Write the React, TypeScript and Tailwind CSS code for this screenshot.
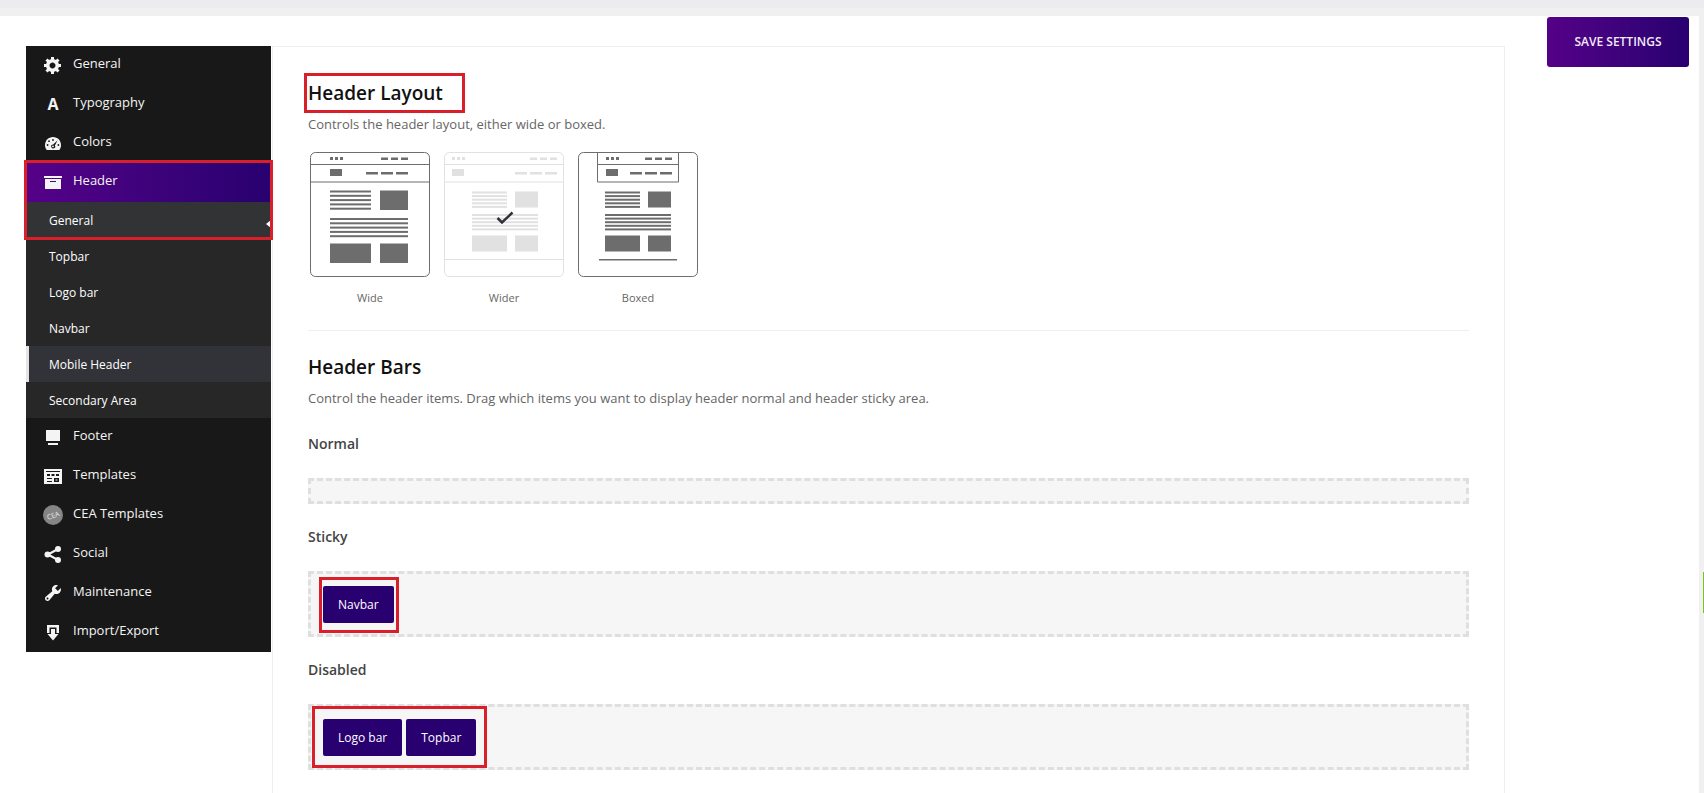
import React, { useState } from "react";
import clsx from "clsx";

type IconProps = { children: React.ReactNode };

function Icon({ children }: IconProps) {
  return (
    <svg viewBox="0 0 20 20" className="w-5 h-5 shrink-0" fill="currentColor" aria-hidden="true">
      {children}
    </svg>
  );
}

const icons = {
  general: (
    <path d="M18 12h-2.18c-.17.7-.44 1.35-.81 1.93l1.54 1.54-2.1 2.1-1.54-1.54c-.58.36-1.23.63-1.91.79V19H8v-2.18c-.68-.16-1.33-.43-1.91-.79l-1.54 1.54-2.12-2.12 1.54-1.54c-.36-.58-.63-1.23-.79-1.91H1V9.03h2.17c.16-.7.44-1.35.8-1.94L2.43 5.55l2.1-2.1 1.54 1.54c.58-.37 1.24-.64 1.93-.81V2h3v2.18c.68.16 1.33.43 1.91.79l1.54-1.54 2.12 2.12-1.54 1.54c.36.59.64 1.24.8 1.94H18V12zm-8.5 1.5c1.66 0 3-1.34 3-3s-1.34-3-3-3-3 1.34-3 3 1.34 3 3 3z" />
  ),
  colors: (
    <>
      <path d="M3.76 17h12.48c1.1-1.37 1.76-3.11 1.76-5 0-4.42-3.58-8-8-8s-8 3.58-8 8c0 1.89.66 3.63 1.76 5z" />
      <g fill="#181818">
        <circle cx="10" cy="7" r="0.900" />
        <circle cx="6" cy="8.2" r="0.900" />
        <circle cx="4.6" cy="12" r="0.900" />
        <circle cx="15.4" cy="12" r="0.900" />
        <path d="M14.6 7.2l-2.7 5.2a2 2 0 1 1-1.7-1z" />
      </g>
      <circle cx="10" cy="13.4" r="0.9" />
    </>
  ),
  header: <path d="M19 4v2H1V4h18zM2 7h16v10H2V7zm11 3V9H7v1h6z" />,
  footer: <path d="M3 3h14v11H3zM5 16h10v2H5z" />,
  templates: (
    <path
      fillRule="evenodd"
      d="M1 3h18v15H1zM3 5v1h14V5zM4 8v2h3V8zM8.500 8v2h3V8zM13 8v2h3V8zM4 12v1h5v-1zM4 15v1h5v-1zM11 12v4h5v-4zM12.500 13.500h2v1h-2z"
    />
  ),
  social: (
    <>
      <path d="M5 10.500L15 5M5 10.500L15 16" stroke="currentColor" strokeWidth="2" />
      <circle cx="4.500" cy="10.500" r="3" />
      <circle cx="15" cy="5" r="3" />
      <circle cx="15" cy="16" r="3" />
    </>
  ),
  maintenance: (
    <path d="M16.680 9.770c-1.340 1.340-3.300 1.670-4.950.990l-5.410 6.520c-.990.990-2.590.990-3.580 0s-.990-2.590 0-3.570l6.520-5.420c-.680-1.650-.350-3.610.990-4.950 1.280-1.280 3.120-1.620 4.720-1.060l-2.890 2.890 2.820 2.820 2.860-2.870c.530 1.580.180 3.390-1.080 4.650zM3.810 16.210c.400.390 1.040.390 1.430 0 .400-.400.400-1.040 0-1.430-.390-.400-1.030-.400-1.430 0-.390.390-.390 1.030 0 1.430z" />
  ),
  importExport: <path d="M4 3h12v8h-2.500V5.500h-7V11H4zM8 7h4v5h3.500L10 18.500 4.500 12H8z" />,
};

function CeaLogo() {
  return (
    <svg viewBox="0 0 20 20" className="w-5 h-5 shrink-0" aria-hidden="true">
      <circle cx="10" cy="10" r="10" fill="#858585" />
      <text x="10" y="13" fontSize="7" textAnchor="middle" fill="#e8e8e8" transform="rotate(-20 10 10)">
        CEA
      </text>
    </svg>
  );
}

const topItems = [
  { label: "General", icon: <Icon>{icons.general}</Icon> },
  { label: "Typography", icon: <span className="w-5 text-center text-base font-bold" aria-hidden="true">A</span> },
  { label: "Colors", icon: <Icon>{icons.colors}</Icon> },
];

const subItems = ["General", "Topbar", "Logo bar", "Navbar", "Mobile Header", "Secondary Area"];

const bottomItems = [
  { label: "Footer", icon: <Icon>{icons.footer}</Icon> },
  { label: "Templates", icon: <Icon>{icons.templates}</Icon> },
  { label: "CEA Templates", icon: <CeaLogo /> },
  { label: "Social", icon: <Icon>{icons.social}</Icon> },
  { label: "Maintenance", icon: <Icon>{icons.maintenance}</Icon> },
  { label: "Import/Export", icon: <Icon>{icons.importExport}</Icon> },
];

function NavItem({ label, icon, active }: { label: string; icon: React.ReactNode; active?: boolean }) {
  return (
    <a
      href="#"
      className={clsx(
        "flex h-[39px] items-center gap-[10px] pb-px pl-[17px] text-[13px] text-[#f4f4f4]",
        active && "bg-linear-to-r from-[#550088] to-[#28006f]"
      )}
    >
      {icon}
      <span className="pb-0.5">{label}</span>
    </a>
  );
}

function Sidebar() {
  return (
    <nav className="w-[245px] shrink-0 bg-[#181818]">
      {topItems.map((item) => (
        <NavItem key={item.label} {...item} />
      ))}
      <div className="relative">
        <NavItem label="Header" icon={<Icon>{icons.header}</Icon>} active />
        <div className="bg-[#272727]">
          {subItems.map((label) => (
            <a
              key={label}
              href="#"
              className={clsx(
                "relative flex h-9 items-center border-l-[3px] pt-0.5 pl-5 text-xs text-white",
                label === "General" && "border-transparent bg-[#323335]",
                label === "Mobile Header" && "border-[#e4e4e8] bg-[#323338]",
                label !== "General" && label !== "Mobile Header" && "border-transparent"
              )}
            >
              {label}
              {label === "General" && (
                <span className="absolute right-0 bottom-[10px] border-y-4 border-r-[5px] border-y-transparent border-r-white" />
              )}
            </a>
          ))}
        </div>
        <div className="pointer-events-none absolute -inset-x-[2px] -top-[3px] h-20 border-[3px] border-[#d9202a]" />
      </div>
      {bottomItems.map((item) => (
        <NavItem key={item.label} {...item} />
      ))}
    </nav>
  );
}

function Stripes({ x, y, width, gap }: { x: number; y: number; width: number; gap: number }) {
  return (
    <>
      {[0, 1, 2, 3, 4].map((i) => (
        <rect key={i} x={x} y={y + i * gap} width={width} height="2" />
      ))}
    </>
  );
}

function LayoutPreview({ kind }: { kind: string }) {
  const left = kind === "Wider" ? 8 : kind === "Boxed" ? 28 : 20;
  const right = kind === "Wider" ? 113 : kind === "Boxed" ? 94 : 98;
  return (
    <svg viewBox="0 0 120 125" className="h-[125px] w-[120px]" fill="#6d6d6d" aria-hidden="true">
      <rect x="0.5" y="0.5" width="119" height="124" rx="5" fill="white" stroke="#6d6d6d" />
      {kind === "Boxed" ? (
        <path d="M19.500 0v30h81V0M19.500 12.500h81" fill="none" stroke="#6d6d6d" />
      ) : (
        <path d="M0 12.500h120M0 30h120" fill="none" stroke="#6d6d6d" />
      )}
      {[0, 5, 10].map((d) => (
        <rect key={d} x={left + d} y="5" width="3" height="3" />
      ))}
      {[27, 17, 7].map((d) => (
        <rect key={d} x={right - d} y="5.500" width="7" height="2.500" />
      ))}
      <rect x={left} y="17" width="12" height="7" />
      {[42, 27, 12].map((d) => (
        <rect key={d} x={right - d} y="20" width="12" height="2.500" />
      ))}
      {kind === "Wide" ? (
        <>
          <Stripes x={20} y={38.500} width={41} gap={4.300} />
          <rect x="70" y="38.500" width="28" height="19.500" />
          <Stripes x={20} y={66} width={78} gap={4.300} />
          <rect x="20" y="91.500" width="41" height="19.500" />
          <rect x="70" y="91.500" width="28" height="19.500" />
        </>
      ) : (
        <g transform={kind === "Wider" ? "translate(1 0)" : undefined}>
          <Stripes x={27} y={39.500} width={35} gap={3.600} />
          <rect x="70" y="39.500" width="23" height="16" />
          <Stripes x={27} y={62} width={66} gap={3.600} />
          <rect x="27" y="83.500" width="35" height="16" />
          <rect x="70" y="83.500" width="23" height="16" />
        </g>
      )}
      {kind === "Wider" && <rect x="0" y="107" width="120" height="1" />}
      {kind === "Boxed" && <rect x="21" y="107" width="78" height="1.500" />}
    </svg>
  );
}

const layouts = ["Wide", "Wider", "Boxed"];

function HeaderLayout() {
  const [layout, setLayout] = useState("Wider");

  return (
    <section className="border-b border-[#efefef] pb-[23px]">
      <div className="relative">
        <h2 className="text-[19px] leading-8 font-semibold text-[#111]">Header Layout</h2>
        <div className="pointer-events-none absolute -top-1 -left-1 h-10 w-[161px] border-[3px] border-[#d9202a]" />
      </div>
      <p className="mt-[5px] text-[13px] leading-5 text-[#666]">Controls the header layout, either wide or boxed.</p>
      <div className="mt-[18px] ml-0.5 flex gap-[14px]">
        {layouts.map((name) => (
          <label key={name} className="relative w-[120px] cursor-pointer text-center">
            <input
              type="radio"
              name="header-layout"
              value={name}
              checked={layout === name}
              onChange={() => setLayout(name)}
              className="sr-only"
            />
            <div className={clsx(layout === name && "opacity-20")}>
              <LayoutPreview kind={name} />
            </div>
            {layout === name && (
              <svg viewBox="0 0 18 14" className="absolute top-[59px] left-[52px] h-[14px] w-[18px]" fill="none" stroke="#303139" strokeWidth="2.500" aria-hidden="true">
                <path d="M1.500 7l4.500 4.500L16.500 1.500" />
              </svg>
            )}
            <span className="mt-3 block text-[11px] leading-[18px] text-[#666]">{name}</span>
          </label>
        ))}
      </div>
    </section>
  );
}

type Zone = { title: string; items: string[]; mark?: string };

const zones: Zone[] = [
  { title: "Normal", items: [] },
  { title: "Sticky", items: ["Navbar"], mark: "-left-1 -right-[5px] -top-[7px] -bottom-[9px]" },
  { title: "Disabled", items: ["Logo bar", "Topbar"], mark: "-inset-x-[11px] -inset-y-[11px]" },
];

function HeaderBars() {
  return (
    <section className="pt-5">
      <h2 className="text-[19px] leading-8 font-semibold text-[#111]">Header Bars</h2>
      <p className="mt-[5px] text-[13px] leading-5 text-[#666]">
        Control the header items. Drag which items you want to display header normal and header sticky area.
      </p>
      {zones.map((zone) => (
        <div key={zone.title} className="pt-6">
          <h3 className="text-sm leading-6 font-semibold text-[#444]">{zone.title}</h3>
          <div className="mt-[22px] mb-[-3px] border-[3px] border-dashed border-[#dfdfdf] bg-[#f6f6f6] py-[10px] px-3">
            {zone.items.length > 0 && (
              <div className="relative flex w-fit gap-1 pt-0.5 pb-px">
                {zone.items.map((item) => (
                  <button key={item} className="h-[37px] rounded-xs bg-[#28006f] px-[15px] text-xs text-white">
                    {item}
                  </button>
                ))}
                <div className={clsx("pointer-events-none absolute border-[3px] border-[#d9202a]", zone.mark)} />
              </div>
            )}
          </div>
        </div>
      ))}
    </section>
  );
}

export default function App() {
  return (
    <div className="h-screen overflow-hidden border-t-8 border-[#ececee] bg-[#f0f0f1] pt-2 pr-[5px] font-['Open_Sans',sans-serif]">
      <div className="relative flex h-full items-start bg-white pl-[26px]">
        <div className="flex min-w-0 flex-1 items-start pt-[30px]">
          <Sidebar />
          <main className="ml-px h-screen min-w-0 flex-1 border border-[#efefef] px-[35px] pt-[30px]">
            <HeaderLayout />
            <HeaderBars />
          </main>
        </div>
        <div className="flex w-[194px] shrink-0 justify-end pt-px pr-[10px]">
          <button className="h-[50px] w-[142px] rounded-[3px] bg-linear-to-r from-[#550088] to-[#28006f] text-xs font-semibold text-[#f4eafa]">
            SAVE SETTINGS
          </button>
        </div>
      </div>
      <div className="fixed top-[572px] right-0 h-[41px] w-px bg-[#7cc21e]" />
    </div>
  );
}
